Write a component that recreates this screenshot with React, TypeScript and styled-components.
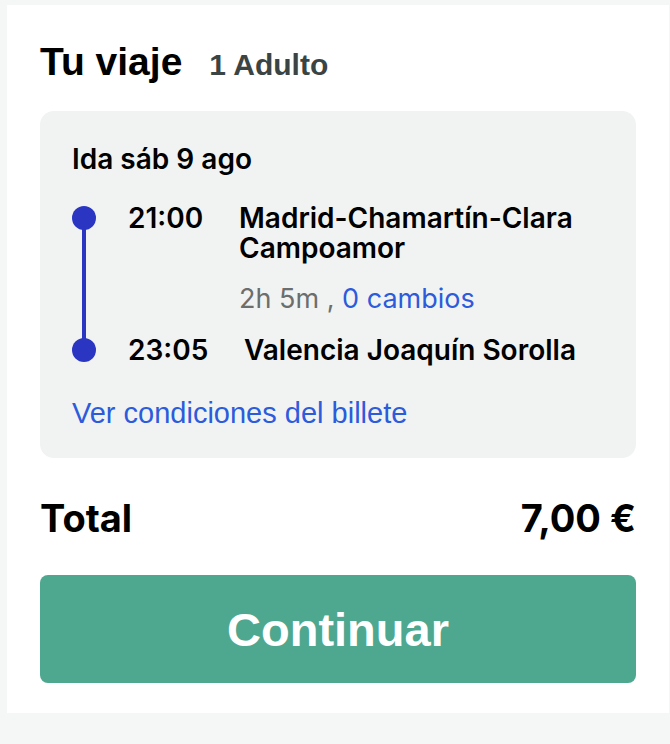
import React from "react";
import styled, { createGlobalStyle } from "styled-components";

const GlobalStyle = createGlobalStyle`
	html, body {
		margin: 0;
		padding: 0;
		background: #f5f7f7;
		font-family: Inter, "Liberation Sans", Arial, sans-serif;
		-webkit-font-smoothing: antialiased;
	}
`;

const Page = styled.div`
	padding: 5px 1px 0 7px;
`;

const Card = styled.section`
	background: #ffffff;
	padding: 35px 33px 30px 33px;
	display: flex;
	flex-direction: column;
`;

const TitleRow = styled.div`
	display: flex;
	align-items: baseline;
	gap: 27px;
	height: 44px;
	line-height: 44px;
`;

const Title = styled.h1`
	margin: 0;
	font-family: "Liberation Sans", Arial, sans-serif;
	font-size: 39px;
	font-weight: 700;
	color: #000;
`;

const Travellers = styled.span`
	font-family: "Liberation Sans", Arial, sans-serif;
	font-size: 30px;
	font-weight: 700;
	color: #3b4444;
`;

const TripBox = styled.div`
	margin-top: 27px;
	background: #f1f3f3;
	border-radius: 14px;
	padding: 32px 32px 29px 32px;
`;

const DateLabel = styled.div`
	font-size: 28px;
	line-height: 32px;
	font-weight: 600;
	color: #000;
`;

const Journey = styled.div`
	margin-top: 28px;
	display: grid;
	grid-template-columns: 56px 111px 1fr;
	grid-template-rows: auto auto auto;
`;

const Rail = styled.div`
	grid-column: 1;
	grid-row: 1 / 4;
	display: flex;
	flex-direction: column;
	align-items: center;
	width: 24px;
	padding: 3px 0;
`;

const Dot = styled.span`
	width: 24px;
	height: 24px;
	border-radius: 50%;
	background: #2a36c2;
	flex: none;
`;

const Line = styled.span`
	width: 4px;
	flex: 1;
	background: #2a36c2;
	margin: -2px 0;
`;

const Time = styled.div<{ $row: number }>`
	grid-column: 2;
	grid-row: ${(p) => p.$row};
	font-size: 28px;
	line-height: 30px;
	font-weight: 600;
	color: #000;
`;

const Station = styled.div<{ $row: number; $indent?: number }>`
	grid-column: 3;
	grid-row: ${(p) => p.$row};
	padding-left: ${(p) => p.$indent ?? 0}px;
	font-size: 28px;
	line-height: 30px;
	font-weight: 600;
	color: #000;
	white-space: nowrap;
`;

const Duration = styled.div`
	grid-column: 3;
	grid-row: 2;
	margin: 21px 0 21px 0;
	font-size: 27px;
	line-height: 30px;
	color: #6b6e6e;
`;

const Link = styled.a`
	color: #2c5bdb;
	text-decoration: none;
	cursor: pointer;
`;

const Conditions = styled(Link)`
	display: block;
	margin-top: 32px;
	font-family: "Liberation Sans", Arial, sans-serif;
	font-size: 29px;
	line-height: 32px;
`;

const TotalRow = styled.div`
	margin-top: 38px;
	display: flex;
	justify-content: space-between;
	align-items: center;
	height: 44px;
	line-height: 44px;
	font-size: 38px;
	font-weight: 700;
	color: #000;
`;

const ContinueButton = styled.button`
	margin-top: 35px;
	height: 108px;
	border: none;
	border-radius: 8px;
	background: #4ea78f;
	color: #ffffff;
	font-family: "Liberation Sans", Arial, sans-serif;
	font-size: 47px;
	font-weight: 700;
	cursor: pointer;
`;

export default function App() {
	return (
		<>
			<GlobalStyle />
			<Page>
				<Card>
					<TitleRow>
						<Title>Tu viaje</Title>
						<Travellers>1 Adulto</Travellers>
					</TitleRow>
					<TripBox>
						<DateLabel>Ida sáb 9 ago</DateLabel>
						<Journey>
							<Rail>
								<Dot />
								<Line />
								<Dot />
							</Rail>
							<Time $row={1}>21:00</Time>
							<Station $row={1}>
								Madrid-Chamartín-Clara
								<br />
								Campoamor
							</Station>
							<Duration>
								2h 5m , <Link>0 cambios</Link>
							</Duration>
							<Time $row={3}>23:05</Time>
							<Station $row={3} $indent={5}>
								Valencia Joaquín Sorolla
							</Station>
						</Journey>
						<Conditions>Ver condiciones del billete</Conditions>
					</TripBox>
					<TotalRow>
						<span>Total</span>
						<span>7,00 €</span>
					</TotalRow>
					<ContinueButton>Continuar</ContinueButton>
				</Card>
			</Page>
		</>
	);
}
